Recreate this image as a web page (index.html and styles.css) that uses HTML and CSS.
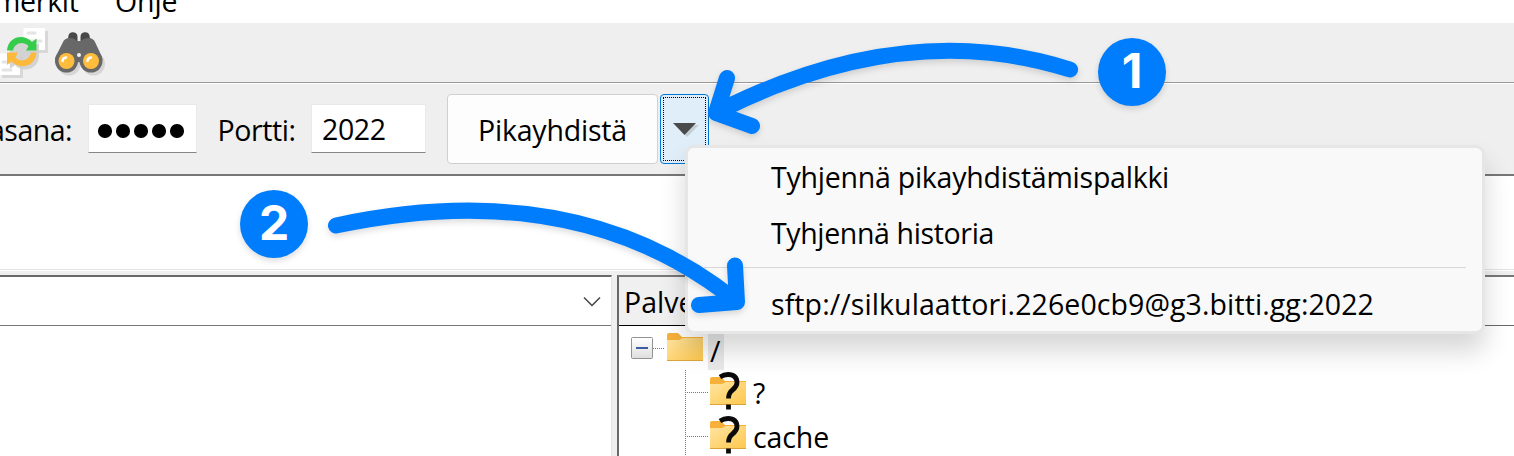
FILE: index.html
```html
<!DOCTYPE html>
<html lang="fi">
<head>
<meta charset="utf-8">
<title>Pikayhdistä</title>
<link rel="stylesheet" href="styles.css">
</head>
<body>
<div class="window">
  <nav class="menubar"><span class="menu-first">merkit</span><span class="menu-help">Ohje</span></nav>
  <div class="toolbar">
    <svg class="tool-icons" width="120" height="58" viewBox="0 23 120 58">
      <g fill="#d8d8d8"><path d="M26 31h22v22H26zM2 56.500h21V78H2z"/></g>
      <g fill="#fff"><path d="M23.500 28H45v22H23.500zM-1 53.500h21V75H-1z"/></g>
      <g stroke="#e4e4e4" stroke-width="3" stroke-linecap="round"><path d="M28 33h7M28 41h13M3 62h6M3 70h8"/></g>
      <path d="M9.500 55C10 36 29 35 34 46l5-3v12l0 1C38 72 20 72 15 65l-5 4z" fill="#cfcfcf" opacity=".9"/>
      <path d="M7 50.500C8 36 24 33 32 42L36.500 38.500V50.500H26L28.500 46C22 40 14 44 13 50.500z" fill="#35cc4b"/>
      <path d="M36.500 52.500C35.500 67 20 70 11.500 61.500L7 65V52.500H18L15.500 57.500C22 63.500 30 59 31 52.500z" fill="#fdb93a"/>
      <g fill="#d6d6d6" transform="translate(2.500 3)"><circle cx="66.500" cy="61" r="11.500"/><circle cx="91" cy="61" r="11.500"/><path d="M90 37l11 24H88z"/></g>
      <path d="M67.500 42l1-6.500a4.600 4.600 0 0 1 9 1V43zM80.500 43v-6.500a4.600 4.600 0 0 1 9-1l1 6.500z" fill="#484848"/>
      <path d="M62.500 43q2-5 7-5 5 0 7.500 3h4q2.500-3 7.500-3 5 0 7 5l6.500 14q1 4-2 8H84q-2.500-3-5-3t-5 3H57.500q-3-4-2-8z" fill="#686868"/>
      <circle cx="66.500" cy="61" r="11.500" fill="#686868"/><circle cx="91" cy="61" r="11.500" fill="#686868"/>
      <circle cx="66.500" cy="61" r="8" fill="#ffbc3d"/><circle cx="91" cy="61" r="8" fill="#ffbc3d"/>
      <path d="M62.500 61q0-3 3.500-3.500M87.500 61q0-3 3.500-3.500" fill="none" stroke="#fff" stroke-width="2.500" stroke-linecap="round"/>
      <circle cx="79" cy="55" r="2" fill="#f4f4f4"/>
    </svg>
  </div>
  <div class="quickbar">
    <span class="label label-pass">asana:</span>
    <div class="field field-pass"><i></i><i></i><i></i><i></i><i></i></div>
    <span class="label label-port">Portti:</span>
    <div class="field field-port">2022</div>
    <div class="button"><span>Pikayhdistä</span></div>
    <div class="drop">
      <div class="focus"><svg width="28" height="18" viewBox="0 0 28 18"><path d="M4 4h23L15 16z" fill="#c3ced5"/><path d="M1 2h23L12.500 14z" fill="#4a4a4a"/></svg></div>
    </div>
  </div>
  <div class="log"></div>
  <div class="panes">
    <section class="local">
      <div class="combo"><svg width="18" height="11" viewBox="0 0 18 11"><path d="M1 1.500l8 8 8-8" fill="none" stroke="#444" stroke-width="1.500"/></svg></div>
    </section>
    <section class="remote">
      <div class="remote-head"><div class="remote-label"><span>Palve</span></div></div>
      <div class="tree">
        <div class="row root">
          <svg width="36" height="44" viewBox="0 0 36 44"><defs>
            <linearGradient id="box" x1="0" y1="0" x2="0" y2="1"><stop stop-color="#fff"/><stop offset="1" stop-color="#dedede"/></linearGradient>
            <linearGradient id="fold" x1="0" y1="0" x2="1" y2="1"><stop stop-color="#ffe5a2"/><stop offset="1" stop-color="#fec84e"/></linearGradient></defs>
            <rect x="2.500" y="11.500" width="21" height="21" rx="1" fill="url(#box)" stroke="#929292"/><path d="M7 22h12" stroke="#3d5da5" stroke-width="2"/><path d="M24 22.500h12" stroke="#777" stroke-dasharray="1 1"/></svg>
          <svg class="folder" width="36" height="44" viewBox="0 0 36 44"><path d="M0 24V9q0-2 2-2h9l4 4h21v23H0z" fill="#f7b13a"/><path d="M0 14h12l4-2h20v21q0 1-1 1H1q-1 0-1-1z" fill="url(#fold)"/><path d="M0 34.500h36" stroke="#dda43e"/></svg>
          <span class="name selected">/</span>
        </div>
        <div class="row child">
          <svg width="24" height="44" viewBox="0 0 24 44"><path d="M.5 0v44M2 22.500h22" stroke="#777" stroke-dasharray="1 1" fill="none"/></svg>
          <div class="unknown"><svg width="36" height="44" viewBox="0 0 36 44"><path d="M0 24V9q0-2 2-2h9l4 4h21v23H0z" fill="#f7b13a"/><path d="M0 14h12l4-2h20v21q0 1-1 1H1q-1 0-1-1z" fill="url(#fold)"/><path d="M0 34.500h36" stroke="#dda43e"/><path d="M10 7q4-2.500 8-2.500 9 0 9 8 0 4-4.500 7.500-4 3-4 8.500M18.500 34.500v5" fill="none" stroke="#0a0a0a" stroke-width="4.800"/></svg></div>
          <span class="name">?</span>
        </div>
        <div class="row child">
          <svg width="24" height="44" viewBox="0 0 24 44"><path d="M.5 0v44M2 22.500h22" stroke="#777" stroke-dasharray="1 1" fill="none"/></svg>
          <div class="unknown"><svg width="36" height="44" viewBox="0 0 36 44"><path d="M0 24V9q0-2 2-2h9l4 4h21v23H0z" fill="#f7b13a"/><path d="M0 14h12l4-2h20v21q0 1-1 1H1q-1 0-1-1z" fill="url(#fold)"/><path d="M0 34.500h36" stroke="#dda43e"/><path d="M10 7q4-2.500 8-2.500 9 0 9 8 0 4-4.500 7.500-4 3-4 8.500M18.500 34.500v5" fill="none" stroke="#0a0a0a" stroke-width="4.800"/></svg></div>
          <span class="name">cache</span>
        </div>
      </div>
    </section>
  </div>
  <div class="popup">
    <div class="item item-bar">Tyhjennä pikayhdistämispalkki</div>
    <div class="item item-history">Tyhjennä historia</div>
    <div class="separator"></div>
    <div class="item item-server">sftp://silkulaattori.226e0cb9@g3.bitti.gg:2022</div>
  </div>
  <svg class="arrows" width="1514" height="456" viewBox="0 0 1514 456">
    <g fill="none" stroke="#007dfc" stroke-width="16" stroke-linecap="round" stroke-linejoin="round">
      <path d="M1070 69.500Q905 17 717 112M727 78L716 113L752 126"/>
      <path d="M336 225.500Q578 174 736 301M735 265.500L737 302L699 305"/>
    </g>
  </svg>
  <div class="badge badge-one">1</div>
  <div class="badge badge-two">2</div>
</div>
</body>
</html>
```
FILE: styles.css
```css
* { box-sizing: border-box; }
body { margin: 0; font-family: "Open Sans", "Noto Sans", sans-serif; font-size: 28.5px; line-height: 40px; color: #000; }
svg { display: block; flex: none; overflow: visible; }
.window { position: relative; width: 1514px; height: 456px; overflow: hidden; background: #efefef; display: flex; flex-direction: column; white-space: nowrap; }
.menubar { height: 23px; flex: none; background: #fff; display: flex; overflow: hidden; }
.menubar span { margin-top: -19px; }
.menu-first { width: 116px; margin-left: -6px; letter-spacing: -.3px; }
.menu-help { margin-left: 5px; letter-spacing: -.1px; }
.toolbar { height: 61px; flex: none; border-bottom: 1px solid #fff; box-shadow: inset 0 -1px #999; }
.tool-icons { overflow: hidden; }
.quickbar { height: 90px; flex: none; display: flex; align-items: flex-start; padding-top: 10px; }
.label { margin-top: 16px; }
.label-pass { width: 91px; margin-left: -11px; letter-spacing: -.5px; }
.label-port { width: 94px; margin-left: 21px; letter-spacing: -.4px; }
.field { height: 49px; margin-top: 10px; background: #fff; border: 1px solid #e9e9e9; border-bottom-color: #868686; }
.field-pass { width: 109px; margin-left: 7.500px; display: flex; gap: 4.500px; align-items: center; padding: 5px 0 0 9.500px; }
.field-pass i { width: 13.500px; height: 13.500px; border-radius: 50%; background: #000; flex: none; }
.field-port { width: 115px; margin-left: -.5px; padding: 4px 0 0 10px; letter-spacing: -.4px; }
.button { width: 211px; height: 70px; margin-left: 21px; border: 1px solid #d0d0d0; border-radius: 4px; background: #fdfdfd; padding: 15px 0 0 30px; letter-spacing: -.2px; }
.drop { width: 49px; height: 70px; margin-left: 2px; border: 1px solid #0078d4; border-radius: 4px; background: #e0eef9; padding: 2px; }
.focus { height: 64px; border: 1px dotted #000; padding: 23px 0 0 8px; }
.log { height: 96px; flex: none; background: #fff; border-top: 2px solid #777; border-bottom: 1px solid #e3e3e3; }
.panes { flex: 1; display: flex; padding-top: 5px; min-height: 0; box-shadow: inset 0 1px #fff; }
.local { width: 612px; background: #fff; border-top: 2px solid #696969; border-right: 1px solid #e3e3e3; }
.combo { height: 49px; border-bottom: 1px solid #777; display: flex; justify-content: flex-end; padding: 19px 10px 0; }
.remote { flex: 1; margin-left: 5px; background: #fff; border-top: 2px solid #777; border-left: 2px solid #696969; }
.remote-head { height: 49px; border-bottom: 1px solid #696969; }
.remote-label { width: 400px; height: 49px; background: #f0f0f0; border-bottom: 1px solid #000; padding: 5px 0 0 5px; }
.row { height: 44px; display: flex; }
.root { padding-left: 10px; }
.root .folder { margin-left: 2px; }
.child { padding-left: 66px; }
.unknown { margin-left: 1px; }
.name { margin: 3px 0 0 7px; letter-spacing: -.1px; }
.selected { width: 16px; height: 36px; margin: 8px 0 0 5px; padding-left: 2px; line-height: 34px; background: #e9e9e9; }
.popup { position: absolute; left: 685px; top: 145px; width: 800px; height: 189px; background: #f9f9f9; border: 3px solid #e6e6e6; border-radius: 9px; box-shadow: 0 17px 26px rgba(0,0,0,.16); padding-top: 9px; }
.item { padding-left: 83px; height: 56px; }
.item-bar { letter-spacing: -.24px; }
.item-history { letter-spacing: -.36px; }
.item-server { letter-spacing: .09px; }
.separator { height: 1px; margin: -2px 16px 16px 16px; background: #d7d7d7; }
.arrows { position: absolute; left: 0; top: 0; filter: drop-shadow(0 3px 3px rgba(0,0,0,.14)); }
.badge { position: absolute; width: 68px; height: 68px; border-radius: 50%; background: #007dfc; color: #fff; font: 700 48px/66px Inter, sans-serif; text-align: center; box-shadow: 0 3px 6px rgba(0,0,0,.14); }
.badge-one { left: 1098px; top: 38px; }
.badge-two { left: 240px; top: 190px; }
```
